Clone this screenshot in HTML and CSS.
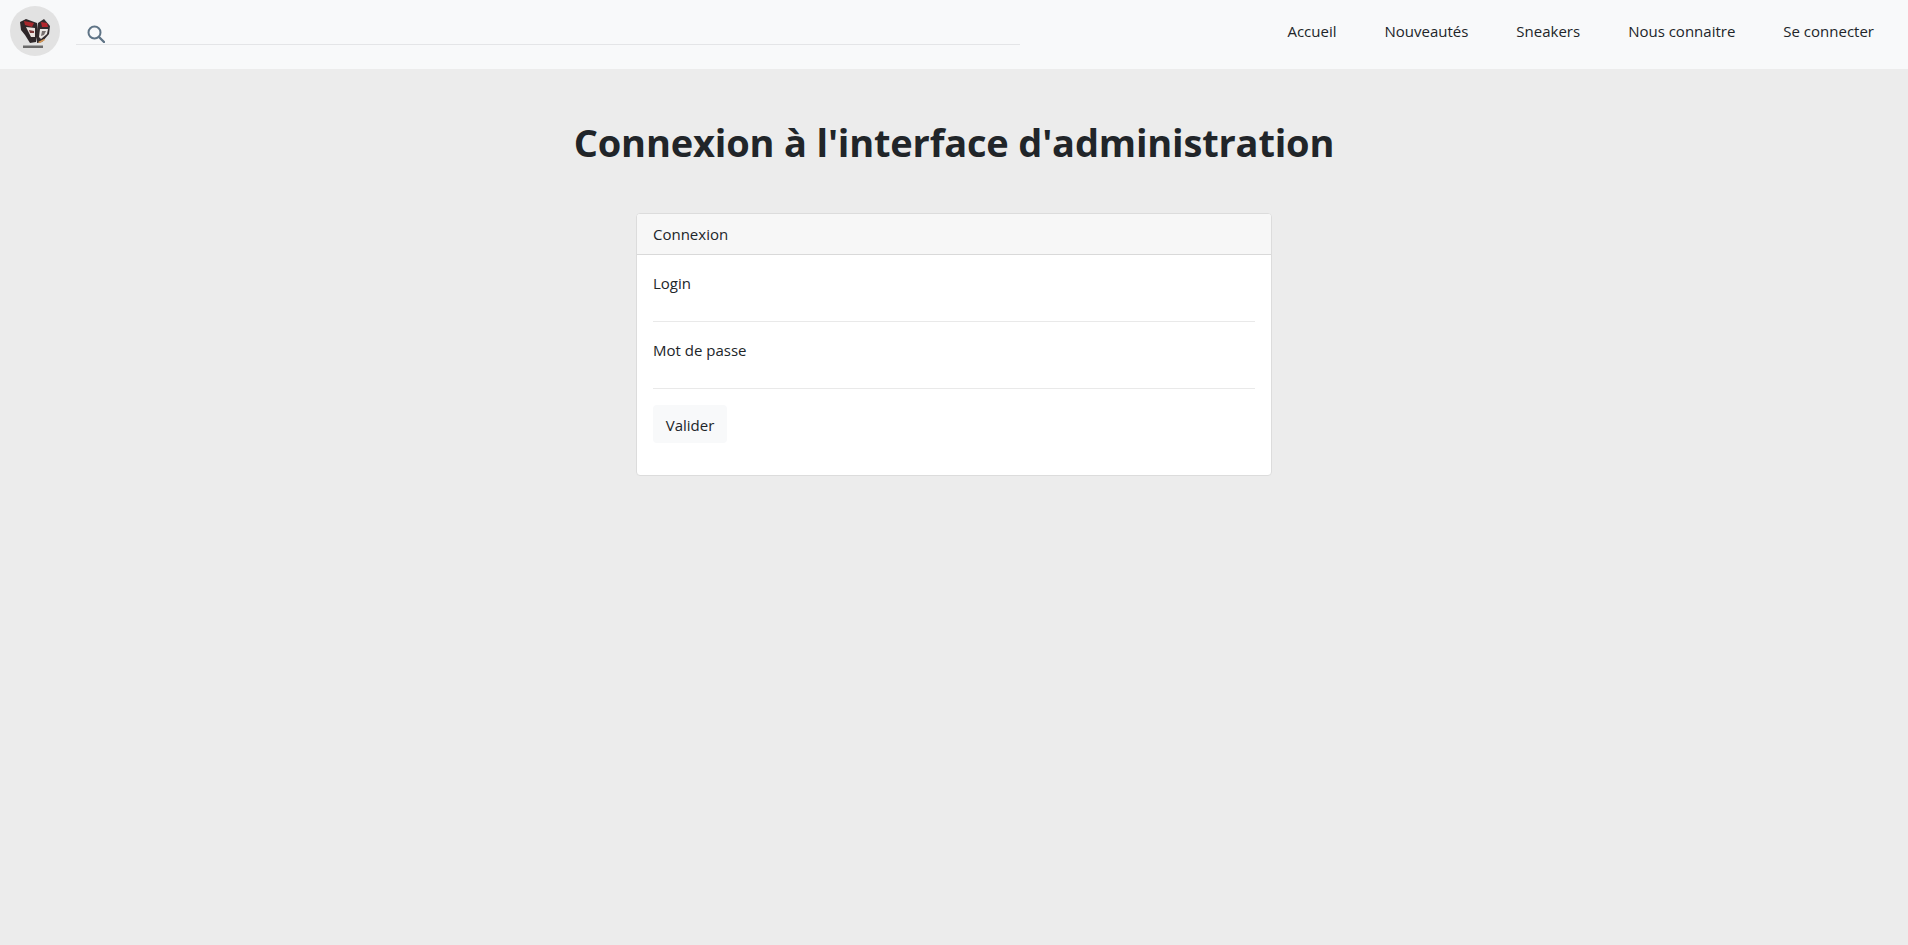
FILE: index.html
```html
<!DOCTYPE html>
<html lang="fr">
<head>
<meta charset="utf-8">
<title>Connexion</title>
<link rel="stylesheet" href="styles.css">
</head>
<body>
<nav class="navbar">
  <a class="brand" href="#">
    <svg class="logo" viewBox="0 0 50 50" width="50" height="50" aria-hidden="true">
      <circle cx="25" cy="25" r="25" fill="#e2e2e2"/>
      <path d="M10 16L16 13L27 17L28 26L26 36L20 37L15 29L11 24Z" fill="#2e2729"/>
      <path d="M14 15L24 17L22 21L15 19Z" fill="#a8282d"/>
      <path d="M16 21L25 22L25 31L21 31Z" fill="#e9e2de"/>
      <path d="M19 24L24 25L24 27L20 27Z" fill="#7d3a3b"/>
      <path d="M28 17L34 13L40 20L39 28L32 36L27 37L27 27Z" fill="#322b2d"/>
      <path d="M31 16L37 17L38 21L32 21Z" fill="#b3262c"/>
      <path d="M30 23L38 23L37 28L31 33L29 31Z" fill="#ebe6e3"/>
      <path d="M32 25L36 25L34 29L31 30Z" fill="#77706f"/>
      <path d="M28 36L34 33L35 34L30 37Z" fill="#d99a55"/>
      <rect x="13" y="39.500" width="20" height="2.500" fill="#6a6a6a"/>
    </svg>
  </a>
  <form class="search">
    <svg class="search-icon" viewBox="0 0 18 18" width="18" height="18" aria-hidden="true">
      <circle cx="7.500" cy="7.500" r="6" fill="none" stroke="#5f7486" stroke-width="2"/>
      <path d="M12 12l5 5" fill="none" stroke="#5f7486" stroke-width="2.400" stroke-linecap="round"/>
    </svg>
  </form>
  <ul class="nav-links">
    <li><a href="#">Accueil</a></li>
    <li><a href="#">Nouveautés</a></li>
    <li><a href="#">Sneakers</a></li>
    <li><a href="#">Nous connaitre</a></li>
    <li><a href="#">Se connecter</a></li>
  </ul>
</nav>
<main class="page">
  <h1 class="title">Connexion à l'interface d'administration</h1>
  <section class="card">
    <header class="card-header">Connexion</header>
    <form class="card-body">
      <div class="field"><label>Login</label></div>
      <div class="field"><label>Mot de passe</label></div>
      <button class="btn" type="button">Valider</button>
    </form>
  </section>
</main>
</body>
</html>
```
FILE: styles.css
```css
* { box-sizing: border-box; }
html, body { height: 100%; }
body {
  margin: 0;
  background: #ececec;
  color: #212529;
  font-family: "Open Sans", "Noto Sans", sans-serif;
  font-size: 15px;
  line-height: 24px;
  overflow: hidden;
}
.navbar {
  display: flex;
  align-items: flex-start;
  height: 69px;
  padding: 6px 26px 0 10px;
  background: #f8f9fa;
}
.brand { display: flex; margin-right: 16px; }
.logo { display: block; }
.search {
  width: 944px;
  height: 39px;
  padding: 19px 0 0 11px;
  border-bottom: 1px solid #e4e5e7;
}
.search-icon { display: block; }
.nav-links {
  display: flex;
  margin: 5px 0 0 auto;
  padding: 0;
  list-style: none;
}
.nav-links a {
  display: block;
  padding: 8px;
  margin-left: 32px;
  color: #212529;
  text-decoration: none;
}
.page { display: flex; flex-direction: column; align-items: center; }
.title {
  margin: 49px 0 47px;
  font-size: 38px;
  line-height: 48px;
  font-weight: 700;
  letter-spacing: -0.18px;
}
.card {
  width: 636px;
  background: #fff;
  border: 1px solid #dcdcdc;
  border-radius: 4px;
  overflow: hidden;
}
.card-header {
  height: 41px;
  padding: 8px 16px;
  background: #f7f7f7;
  border-bottom: 1px solid #d9d9d9;
}
.card-body { padding: 16px 16px 32px; }
.field {
  height: 51px;
  margin-bottom: 16px;
  border-bottom: 1px solid #e9e9e9;
}
.btn {
  display: block;
  width: 74px;
  height: 38px;
  padding: 1px 0 0;
  border: 0;
  border-radius: 4px;
  background: #f8f9fa;
  color: #212529;
  font: inherit;
}
```
